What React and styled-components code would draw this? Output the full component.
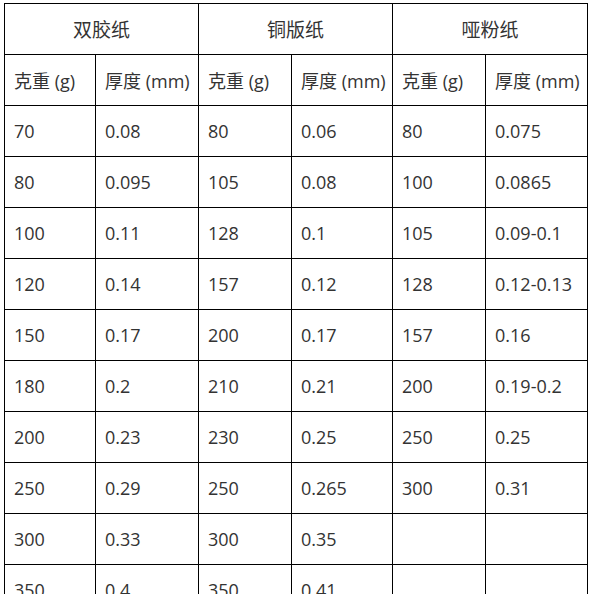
import styled, { createGlobalStyle } from "styled-components";

const GlobalStyle = createGlobalStyle`
  html, body {
    margin: 0;
    padding: 0;
    background: #fff;
    overflow: hidden;
  }
  body {
    font-family: "Open Sans", "Noto Sans CJK SC", sans-serif;
  }
`;

const Page = styled.div`
  padding: 3px 0 0 4px;
`;

const Table = styled.table`
  border-collapse: collapse;
  table-layout: fixed;
  width: 584px;
  color: #333;
  font-size: 18px;
`;

const Cell = styled.td`
  border: 1px solid #000;
  height: 50px;
  padding: 0;
  text-indent: 9px;
  text-align: left;
  vertical-align: middle;
  white-space: nowrap;
  font-weight: 400;
`;

const GroupHead = styled(Cell).attrs({ as: "th" })`
  text-align: center;
  text-indent: 0;
  font-size: 19px;
`;

const groups = ["双胶纸", "铜版纸", "哑粉纸"];

const colWidths = [91, 103, 93, 101, 93, 102];

const rows = [
  ["70", "0.08", "80", "0.06", "80", "0.075"],
  ["80", "0.095", "105", "0.08", "100", "0.0865"],
  ["100", "0.11", "128", "0.1", "105", "0.09-0.1"],
  ["120", "0.14", "157", "0.12", "128", "0.12-0.13"],
  ["150", "0.17", "200", "0.17", "157", "0.16"],
  ["180", "0.2", "210", "0.21", "200", "0.19-0.2"],
  ["200", "0.23", "230", "0.25", "250", "0.25"],
  ["250", "0.29", "250", "0.265", "300", "0.31"],
  ["300", "0.33", "300", "0.35", "", ""],
  ["350", "0.4", "350", "0.41", "", ""],
];

const App = () => {
  return (
    <Page>
      <GlobalStyle />
      <Table>
        <colgroup>
          {colWidths.map((w, i) => (
            <col key={i} style={{ width: w }} />
          ))}
        </colgroup>
        <thead>
          <tr>
            {groups.map((g) => (
              <GroupHead key={g} colSpan={2}>
                {g}
              </GroupHead>
            ))}
          </tr>
          <tr>
            {groups.flatMap((g) => [
              <Cell key={g + "w"}>克重 (g)</Cell>,
              <Cell key={g + "t"}>厚度 (mm)</Cell>,
            ])}
          </tr>
        </thead>
        <tbody>
          {rows.map((row, i) => (
            <tr key={i}>
              {row.map((v, j) => (
                <Cell key={j}>{v}</Cell>
              ))}
            </tr>
          ))}
        </tbody>
      </Table>
    </Page>
  );
};

export default App;
